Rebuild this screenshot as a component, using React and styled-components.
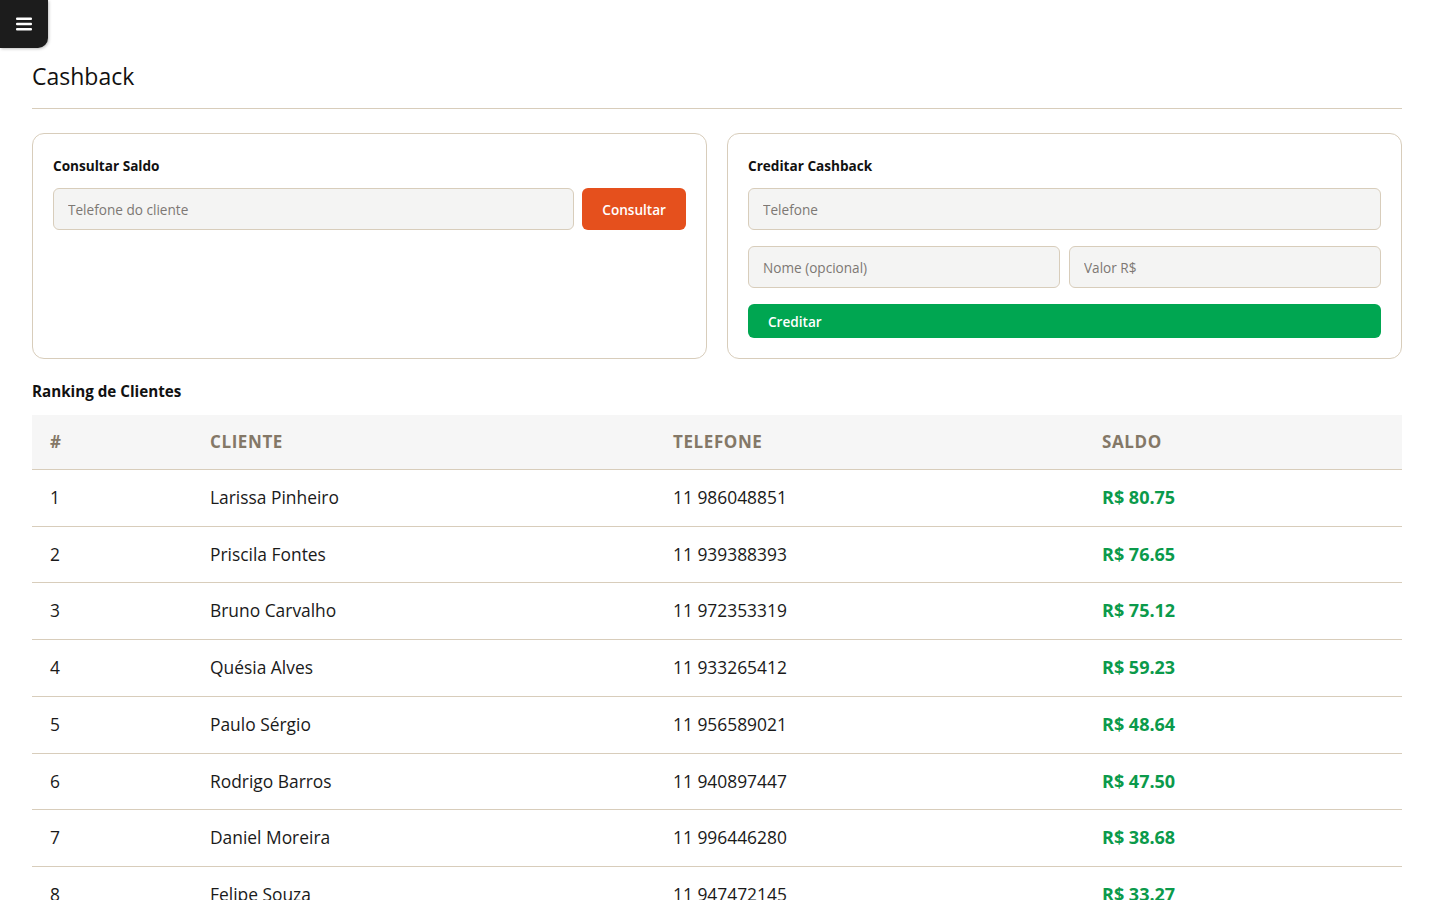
import React from 'react'
import styled, { createGlobalStyle } from 'styled-components'

const GlobalStyle = createGlobalStyle`
  * { box-sizing: border-box; }
  body {
    margin: 0;
    background: #ffffff;
    font-family: "Segoe UI", "Open Sans", "Noto Sans", sans-serif;
    color: #111111;
  }
`;

const BEIGE = '#d8cdbb';

const MenuButton = styled.button`
  display: flex;
  align-items: center;
  justify-content: center;
  width: 48px;
  height: 48px;
  border: none;
  padding: 0;
  background: #1c1c1c;
  border-bottom-right-radius: 10px;
  box-shadow: 1px 1px 3px rgba(0, 0, 0, 0.25);
  cursor: pointer;
`;

const Page = styled.main`
  padding: 0 38px 0 32px;
`;

const Title = styled.h1`
  margin: 12px 0 0;
  padding-bottom: 16px;
  font-size: 23px;
  font-weight: 400;
  line-height: 32px;
  border-bottom: 1px solid ${BEIGE};
`;

const Cards = styled.section`
  display: grid;
  grid-template-columns: 1fr 1fr;
  gap: 20px;
  margin-top: 24px;
`;

const Card = styled.div`
  border: 1px solid ${BEIGE};
  border-radius: 12px;
  padding: 20px;
  min-height: 226px;
  display: flex;
  flex-direction: column;
  gap: 16px;
`;

const CardTitle = styled.h3`
  margin: 2px 0 -4px;
  font-size: 13.6px;
  font-weight: 700;
  line-height: 20px;
`;

const Row = styled.div`
  display: flex;
  gap: ${p => p.$gap || 8}px;
`;

const Input = styled.input`
  flex: 1;
  min-width: 0;
  height: 42px;
  padding: 0 14px;
  background: #f4f4f3;
  border: 1px solid ${BEIGE};
  border-radius: 6px;
  font-family: inherit;
  font-size: 13.6px;
  color: #333;
  outline: none;
  &::placeholder { color: #7d7873; }
`;

const Button = styled.button`
  height: ${p => p.$h || 42}px;
  padding: 0 ${p => p.$px || 20}px;
  border: none;
  border-radius: 6px;
  background: ${p => p.$bg};
  color: #ffffff;
  font-family: inherit;
  font-size: 13.6px;
  font-weight: 600;
  text-align: ${p => p.$align || 'center'};
  width: ${p => (p.$block ? '100%' : 'auto')};
  cursor: pointer;
`;

const SectionTitle = styled.h2`
  margin: 20px 0 12px;
  font-size: 15.2px;
  font-weight: 700;
  line-height: 24px;
`;

const Table = styled.table`
  width: 100%;
  border-collapse: collapse;
`;

const Th = styled.th`
  text-align: left;
  background: #f6f6f6;
  padding: 16px 18px;
  font-size: 17px;
  font-weight: 700;
  letter-spacing: 0.6px;
  color: #847867;
  border-bottom: 1px solid ${BEIGE};
  line-height: 22px;
  width: ${p => p.$w || 'auto'};
`;

const Td = styled.td`
  padding: 16px 18px;
  font-size: ${p => (p.$money ? 18 : 17.4)}px;
  line-height: 23.7px;
  border-bottom: 1px solid ${BEIGE};
  color: ${p => (p.$money ? '#0b9a4b' : '#1a1a1a')};
  font-weight: ${p => (p.$money ? 700 : 400)};
`;

const clients = [
  ['Larissa Pinheiro', '11 986048851', '80.75'],
  ['Priscila Fontes', '11 939388393', '76.65'],
  ['Bruno Carvalho', '11 972353319', '75.12'],
  ['Quésia Alves', '11 933265412', '59.23'],
  ['Paulo Sérgio', '11 956589021', '48.64'],
  ['Rodrigo Barros', '11 940897447', '47.50'],
  ['Daniel Moreira', '11 996446280', '38.68'],
  ['Felipe Souza', '11 947472145', '33.27'],
  ['Ana Beatriz', '11 981234567', '29.10'],
  ['Marcos Lima', '11 935551212', '21.40'],
];

export default function App() {
  return (
    <>
      <GlobalStyle />
      <MenuButton aria-label="menu">
        <svg width="16" height="14" viewBox="0 0 16 14">
          <rect x="0" y="0.5" width="16" height="2.4" rx="1" fill="#fff" />
          <rect x="0" y="5.8" width="16" height="2.4" rx="1" fill="#fff" />
          <rect x="0" y="11.1" width="16" height="2.4" rx="1" fill="#fff" />
        </svg>
      </MenuButton>
      <Page>
        <Title>Cashback</Title>

        <Cards>
          <Card>
            <CardTitle>Consultar Saldo</CardTitle>
            <Row>
              <Input placeholder="Telefone do cliente" />
              <Button $bg="#e5501d">Consultar</Button>
            </Row>
          </Card>
          <Card>
            <CardTitle>Creditar Cashback</CardTitle>
            <Row>
              <Input placeholder="Telefone" />
            </Row>
            <Row $gap={9}>
              <Input placeholder="Nome (opcional)" />
              <Input placeholder="Valor R$" />
            </Row>
            <Button $bg="#00a651" $h={34} $px={20} $align="left" $block>
              Creditar
            </Button>
          </Card>
        </Cards>

        <SectionTitle>Ranking de Clientes</SectionTitle>
        <Table>
          <thead>
            <tr>
              <Th $w="160px">#</Th>
              <Th $w="463px">CLIENTE</Th>
              <Th $w="429px">TELEFONE</Th>
              <Th>SALDO</Th>
            </tr>
          </thead>
          <tbody>
            {clients.map(([name, phone, value], i) => (
              <tr key={phone}>
                <Td>{i + 1}</Td>
                <Td>{name}</Td>
                <Td>{phone}</Td>
                <Td $money>R$ {value}</Td>
              </tr>
            ))}
          </tbody>
        </Table>
      </Page>
    </>
  );
}
